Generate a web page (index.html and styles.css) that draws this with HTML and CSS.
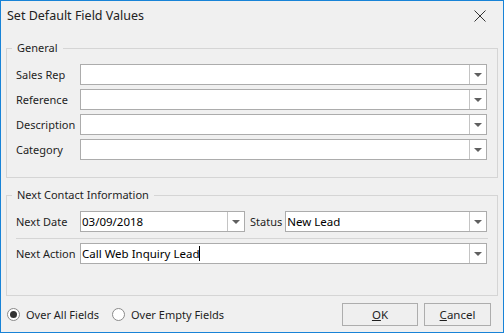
FILE: index.html
```html
<!DOCTYPE html>
<html lang="en">
<head>
  <meta charset="UTF-8">
  <title>Set Default Field Values</title>
  <link rel="stylesheet" href="styles.css">
</head>
<body>
  <div class="dialog">
    <div class="titlebar">
      <span class="title">Set Default Field Values</span>
      <svg class="close" width="12" height="12" viewBox="0 0 12 12">
        <path d="M0.5 0.5 L11.5 11.5 M11.5 0.5 L0.5 11.5" stroke="#333" stroke-width="1" fill="none"/>
      </svg>
    </div>

    <fieldset class="group general">
      <legend>General</legend>
      <div class="row">
        <label>Sales Rep</label>
        <div class="combo"><span class="value"></span><span class="drop"></span></div>
      </div>
      <div class="row">
        <label>Reference</label>
        <div class="combo"><span class="value"></span><span class="drop"></span></div>
      </div>
      <div class="row">
        <label>Description</label>
        <div class="combo"><span class="value"></span><span class="drop"></span></div>
      </div>
      <div class="row">
        <label>Category</label>
        <div class="combo"><span class="value"></span><span class="drop"></span></div>
      </div>
    </fieldset>

    <fieldset class="group contact">
      <legend>Next Contact Information</legend>
      <div class="row">
        <label>Next Date</label>
        <div class="combo date"><span class="value">03/09/2018</span><span class="drop"></span></div>
        <label class="status-label">Status</label>
        <div class="combo"><span class="value">New Lead</span><span class="drop"></span></div>
      </div>
      <div class="sep"></div>
      <div class="row">
        <label>Next Action</label>
        <div class="combo"><span class="value">Call Web Inquiry Lead<span class="caret"></span></span><span class="drop"></span></div>
      </div>
    </fieldset>

    <div class="footer">
      <div class="radios">
        <span class="radio checked"></span><span class="radio-text">Over All Fields</span>
        <span class="radio"></span><span class="radio-text">Over Empty Fields</span>
      </div>
      <div class="buttons">
        <button class="btn ok"><u>O</u>K</button>
        <button class="btn cancel"><u>C</u>ancel</button>
      </div>
    </div>
  </div>
</body>
</html>
```

FILE: styles.css
```css
body {
  margin: 0;
  font-family: 'Noto Sans', 'Open Sans', sans-serif;
  font-size: 11px;
  color: #1e1e1e;
  background: #f0f0f0;
}

.dialog {
  width: 504px;
  height: 333px;
  box-sizing: border-box;
  border: 1px solid #1883d7;
  background: #f0f0f0;
  display: flex;
  flex-direction: column;
}

.titlebar {
  height: 29px;
  display: flex;
  align-items: center;
  justify-content: space-between;
  padding: 0 17px 0 6px;
}

.title {
  font-size: 12.5px;
  color: #222;
}

.close {
  margin-top: 1px;
}

.group {
  margin: 0 5px;
  border: 1px solid #d5d5d5;
  padding: 8px 10px 17px 9px;
  min-width: 0;
}

.group legend {
  margin-left: -4px;
  padding: 0 5px;
  line-height: 16px;
  color: #1e1e1e;
}

.general {
  margin-top: 10px;
}

.contact {
  margin-top: 9px;
  padding-bottom: 31px;
}

.row {
  display: flex;
  align-items: center;
  height: 21px;
}

.row + .row {
  margin-top: 4px;
}

.row label {
  width: 64px;
  flex-shrink: 0;
  white-space: nowrap;
}

.combo {
  flex: 1;
  height: 21px;
  box-sizing: border-box;
  border: 1px solid #acacac;
  background: #fff;
  display: flex;
}

.combo.date {
  flex: 0 0 165px;
}

.status-label {
  width: auto !important;
  margin: 0 3px 0 5px;
}

.value {
  flex: 1;
  padding-left: 1px;
  line-height: 19px;
  font-size: 11.5px;
  color: #000;
  white-space: nowrap;
}

.caret {
  display: inline-block;
  width: 1px;
  height: 15px;
  background: #000;
  vertical-align: -3px;
}

.drop {
  width: 16px;
  border-left: 1px solid #c4c4c4;
  display: flex;
  align-items: center;
  justify-content: center;
}

.drop::after {
  content: "";
  border-left: 4px solid transparent;
  border-right: 4px solid transparent;
  border-top: 4px solid #606060;
  margin-top: 1px;
}

.sep {
  height: 1px;
  background: #d5d5d5;
  margin: 6px -1px 4px 0;
}

.contact .sep + .row {
  margin-top: 0;
}

.footer {
  display: flex;
  justify-content: space-between;
  align-items: center;
  padding: 7px 12px 0 6px;
}

.radios {
  display: flex;
  align-items: center;
}

.radio {
  width: 13px;
  height: 13px;
  box-sizing: border-box;
  border: 1px solid #8a8a8a;
  border-radius: 50%;
  background: #fff;
  display: flex;
  align-items: center;
  justify-content: center;
}

.radio.checked::after {
  content: "";
  width: 7px;
  height: 7px;
  border-radius: 50%;
  background: #333;
}

.radio-text {
  margin: 0 13px 0 6px;
}

.buttons {
  display: flex;
  gap: 6px;
}

.btn {
  height: 23px;
  box-sizing: border-box;
  border: 1px solid #adadad;
  background: #efefef;
  font-family: inherit;
  font-size: 11.5px;
  color: #1e1e1e;
  padding: 0;
}

.btn.ok {
  width: 76px;
}

.btn.cancel {
  width: 67px;
}
```
